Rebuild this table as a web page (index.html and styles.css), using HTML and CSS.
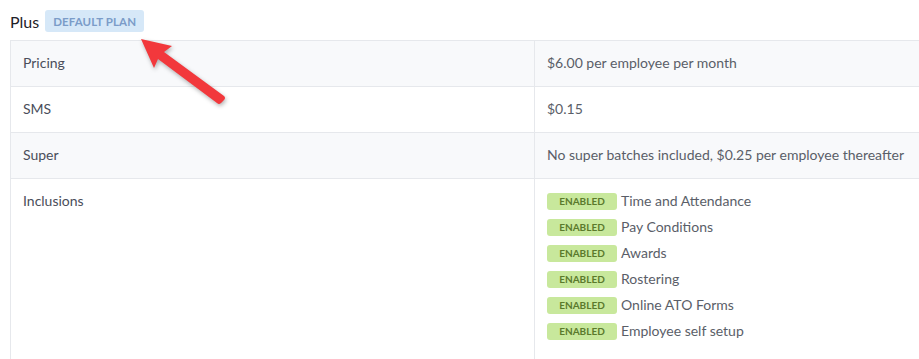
FILE: index.html
```html
<!DOCTYPE html>
<html>
<head>
<meta charset="utf-8">
<link rel="stylesheet" href="styles.css">
</head>
<body>
<div class="page">
  <div class="title">
    <span class="plan-name">Plus</span>
    <span class="badge-default">DEFAULT PLAN</span>
  </div>
  <div class="table">
    <div class="row alt">
      <div class="cell label">Pricing</div>
      <div class="cell value">$6.00 per employee per month</div>
    </div>
    <div class="row">
      <div class="cell label">SMS</div>
      <div class="cell value">$0.15</div>
    </div>
    <div class="row alt">
      <div class="cell label">Super</div>
      <div class="cell value">No super batches included, $0.25 per employee thereafter</div>
    </div>
    <div class="row tall">
      <div class="cell label">Inclusions</div>
      <div class="cell value">
        <ul class="inclusions">
          <li><span class="badge-enabled">ENABLED</span>Time and Attendance</li>
          <li><span class="badge-enabled">ENABLED</span>Pay Conditions</li>
          <li><span class="badge-enabled">ENABLED</span>Awards</li>
          <li><span class="badge-enabled">ENABLED</span>Rostering</li>
          <li><span class="badge-enabled">ENABLED</span>Online ATO Forms</li>
          <li><span class="badge-enabled">ENABLED</span>Employee self setup</li>
        </ul>
      </div>
    </div>
  </div>
  <svg class="arrow" width="100" height="80" viewBox="0 0 100 80">
    <path d="M1 1 L32 8 L24 14 L84 58 Q86 60 84 62 L81 65 Q79 67 77 65 L18 21 L14 30 Z" fill="#f2383c"/>
  </svg>
</div>
</body>
</html>
```
FILE: styles.css
```css
html, body {
  margin: 0;
  padding: 0;
  overflow: hidden;
  background: #ffffff;
}
.page {
  position: relative;
  padding: 10px 0 0 10px;
  font-family: "Lato", "Liberation Sans", sans-serif;
  color: #4d5260;
}
.title {
  display: flex;
  align-items: center;
  height: 22px;
  gap: 6px;
  margin-bottom: 8px;
}
.plan-name {
  font-size: 16px;
  color: #1f2128;
}
.badge-default {
  display: inline-flex;
  align-items: center;
  height: 22px;
  padding: 0 8px;
  border-radius: 3px;
  background: #d6e8f8;
  color: #7b9cc8;
  font-size: 11.5px;
  font-weight: 700;
  letter-spacing: 0.1px;
}
.table {
  border-top: 1px solid #e6e8ec;
  border-left: 1px solid #e6e8ec;
}
.row {
  display: grid;
  grid-template-columns: 523px 1fr;
  border-bottom: 1px solid #e6e8ec;
  background: #ffffff;
}
.row.alt {
  background: #f8f9fb;
}
.cell {
  padding: 12px 12px 13px 12px;
  font-size: 14px;
  line-height: 20px;
}
.cell.value {
  border-left: 1px solid #e6e8ec;
}
.label {
  color: #4a4e5a;
}
.value {
  color: #5a5e68;
}
.row.tall .cell {
  min-height: 170px;
}
.inclusions {
  list-style: none;
  margin: 0;
  padding: 0;
  display: flex;
  flex-direction: column;
  gap: 6px;
}
.inclusions li {
  display: flex;
  align-items: center;
  height: 20px;
  gap: 4px;
}
.badge-enabled {
  display: inline-flex;
  align-items: center;
  justify-content: center;
  width: 70px;
  height: 17px;
  border-radius: 3px;
  background: #c8e89c;
  color: #5b7a2c;
  font-size: 10px;
  font-weight: 700;
}
.arrow {
  position: absolute;
  left: 140px;
  top: 38px;
  filter: drop-shadow(1px 2px 2px rgba(0,0,0,0.3));
}
```
